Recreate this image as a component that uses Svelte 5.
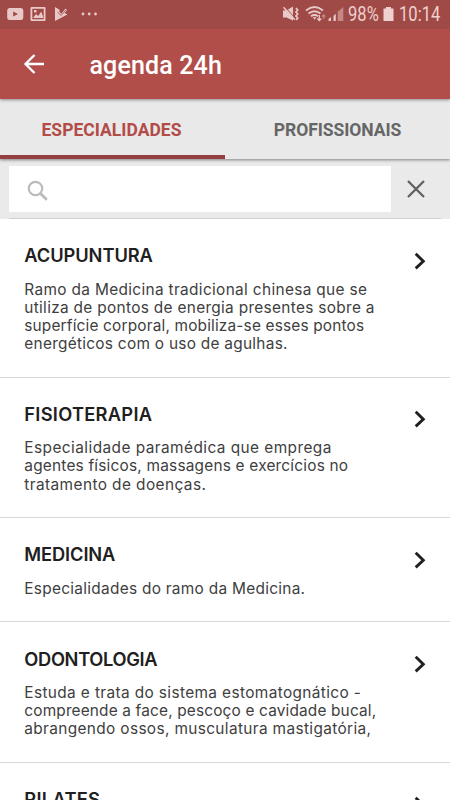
<script>
  const rows = [
    { title: 'ACUPUNTURA', width: 128.5, lines: [
      ['Ramo da Medicina tradicional chinesa que se', 343],
      ['utiliza de pontos de energia presentes sobre a', 350.5],
      ['superfície corporal, mobiliza-se esses pontos', 340],
      ['energéticos com o uso de agulhas.', 263.5]
    ] },
    { title: 'FISIOTERAPIA', width: 128, lines: [
      ['Especialidade paramédica que emprega', 307.5],
      ['agentes físicos, massagens e exercícios no', 324],
      ['tratamento de doenças.', 182]
    ] },
    { title: 'MEDICINA', width: 91, lines: [
      ['Especialidades do ramo da Medicina.', 281]
    ] },
    { title: 'ODONTOLOGIA', width: 133, lines: [
      ['Estuda e trata do sistema estomatognático -', 337],
      ['compreende a face, pescoço e cavidade bucal,', 352],
      ['abrangendo ossos, musculatura mastigatória,', 347]
    ] },
    { title: 'PILATES', width: 76, lines: [['', 0]] }
  ];

  // Spreads the letters so that the label takes the given width.
  function fit(node, width) {
    const count = node.textContent.length;
    if (!count || !width) return;
    const natural = node.getBoundingClientRect().width;
    node.style.letterSpacing = `${(width - natural) / count}px`;
  }
</script>

<div class="screen">
  <header>
    <div class="status">
      <svg class="left" width="104" height="29" viewBox="0 0 104 29" fill="#e9c9c8">
        <path fill-rule="evenodd" d="M9.5 8h11.5q2.3 0 2.3 2.5v7q0 2.5-2.3 2.5H9.5q-2.3 0-2.3-2.5v-7Q7.2 8 9.5 8zM13.2 11.5v5l4.8-2.5z" />
        <path fill-rule="evenodd" d="M31.5 7h13q1 0 1 1v12q0 1-1 1h-13q-1 0-1-1V8q0-1 1-1zM32.3 8.8v10.4h11.4V8.8z" />
        <path d="M33 18l3-4 2.2 2 3.1-4.5L43.5 18zM34 10h2.500v2.500H34z" />
        <path d="M55 7l4.500 2.800v2.200l1.800 1.700 4.200-5.200 1.700 1.400-2.600 3 2.800 1.600L55 21z" />
        <path d="M57.500 12.200l3.600 3.300 5.300-6" fill="none" stroke="#a04a47" stroke-width=".8" />
        <circle cx="83" cy="14" r="1.4" /><circle cx="89.200" cy="14" r="1.4" /><circle cx="95.500" cy="14" r="1.4" />
      </svg>
      <svg class="signals" width="64" height="29" viewBox="0 0 64 29" fill="none" stroke="#e9c9c8">
        <path d="M1 10.500h3.500L11 6.500v14L4.500 17.500H1z" fill="#e9c9c8" stroke="none" />
        <path d="M2.500 6.500l10.500 11.500" stroke="#a04a47" stroke-width="1" />
        <path d="M1.500 7.200l11.300 12.500" stroke-width="1.500" />
        <path d="M14 8l1.700 2-1.700 2 1.700 2-1.700 2 1.700 2-1.400 2" stroke-width="1.700" />
        <path d="M24 10.500q8.500-6.800 17 0M26.500 13.500q6-4.600 12 0M29 16.300q3.500-2.500 7 0" stroke-width="1.900" />
        <path d="M30.700 17.200h3.700l-1.800 2.600z" fill="#e9c9c8" stroke="none" />
        <path d="M37.300 15v5.500m-2-2l2 2 2-2" stroke-width="1.300" />
        <path d="M41.700 19v-4m-1.700 1.700l1.700-1.900 1.700 1.900" stroke="#c58d8a" stroke-width="1.100" />
        <path d="M46.500 21v-2l2.500-2V21zM51.500 21v-5l2.300-2.200V21z" fill="#e9c9c8" stroke="none" />
        <path d="M55.700 21v-9.200l5.600-4.800v14z" fill="#c58885" stroke="none" />
      </svg>
      <span class="battery-text"><span class="narrow">98%</span></span>
      <svg class="battery" width="11" height="29" viewBox="0 0 11 29"><path d="M0.500 8.500h2.500V7h5v1.500h2.500V21H.5z" fill="#eed1d0" /></svg>
      <span class="clock"><span class="narrow">10:14</span></span>
    </div>
    <div class="appbar">
      <svg width="24" height="24" viewBox="0 0 24 24" fill="none" stroke="#fff" stroke-width="2.300"><path d="M22 12H4M12.500 3L3.500 12l9 9" /></svg>
      <h1><span use:fit={132.5}>agenda 24h</span></h1>
    </div>
  </header>
  <nav>
    <button class="tab active"><span use:fit={140}>ESPECIALIDADES</span></button>
    <button class="tab"><span use:fit={127.5}>PROFISSIONAIS</span></button>
  </nav>
  <div class="search">
    <div class="field">
      <svg width="24" height="24" viewBox="0 0 24 24" fill="none" stroke="#bbb"><circle cx="9.500" cy="9.500" r="6.700" stroke-width="2.200" /><path d="M14.500 14.500l6.300 6.300" stroke-width="2.800" /></svg>
    </div>
    <svg class="clear" width="18" height="18" viewBox="0 0 18 18" fill="none" stroke="#606060" stroke-width="2.300"><path d="M1 1l16 16M17 1L1 17" /></svg>
    <i></i>
  </div>
  <main>
    {#each rows as row}
      <section>
        <div class="copy">
          <h2><span use:fit={row.width}>{row.title}</span></h2>
          {#each row.lines as [text, width]}
            <p><span use:fit={width}>{text}</span></p>
          {/each}
        </div>
        <svg class="chevron" width="12" height="18" viewBox="0 0 12 18" fill="none" stroke="#202020" stroke-width="2.900"><path d="M1.700 1.800L9.300 9.200l-7.600 7.200" /></svg>
      </section>
    {/each}
  </main>
</div>

<style>
  :global(body) { margin: 0; overflow: hidden; }
  .screen { width: 450px; height: 800px; overflow: hidden; background: #fff; display: flex; flex-direction: column; font-family: Roboto, sans-serif; }
  header, nav, .search { flex: none; }
  span { white-space: nowrap; display: inline-block; }
  svg { display: block; flex: none; }
  header { height: 99px; background: #b24e49; box-shadow: 0 1px 3px rgba(0,0,0,.4); position: relative; z-index: 2; }
  .status { height: 29px; background: #a04a47; display: flex; align-items: center; color: #eed1d0; font-size: 19.5px; line-height: 29px; }
  .narrow { transform: scaleX(.85); transform-origin: left; }
  .signals { margin-left: 177.500px; }
  .battery-text { width: 31px; margin-left: 2.500px; }
  .battery { margin-left: 4px; }
  .clock { margin-left: 5px; width: 44px; }
  .appbar { height: 70px; display: flex; align-items: center; padding-left: 22px; color: #fff; }
  h1 { margin: 4px 0 0 43.500px; font-size: 25px; line-height: 30px; font-weight: 500; }
  nav { height: 60px; display: flex; background: #e9e9e9; box-shadow: 0 1px 3px rgba(0,0,0,.45); position: relative; z-index: 1; }
  .tab { box-sizing: border-box; width: 225px; padding: 5px 0 0; border: 0; border-bottom: 4px solid transparent; background: none; color: #666; font: 700 17.5px/22px Roboto, sans-serif; text-align: center; }
  .active { color: #b34c48; border-color: #963f40; padding: 5px 2px 0 0; }
  .search { height: 60px; background: #eaeaea; display: flex; flex-wrap: wrap; box-sizing: border-box; padding: 7px 9px 0; }
  .field { width: 382px; height: 46px; background: #fff; display: flex; align-items: center; padding-left: 17px; box-sizing: border-box; }
  .field svg { margin-top: 4px; }
  .clear { margin: 14px 0 0 15.5px; }
  .search i { width: 432px; height: 1px; margin-top: 5px; background: #d0d0d0; }
  main { flex: 1; overflow: hidden; font-family: Inter, sans-serif; }
  section { display: flex; justify-content: space-between; border-bottom: 1px solid #d8d8d8; padding: 24.2px 24.5px 23.5px 24.3px; }
  h2 { margin: 0 0 13.4px; height: 24px; font-size: 18.3px; line-height: 24px; font-weight: 600; color: #202020; }
  p { margin: 0; height: 18.15px; font-size: 15.4px; line-height: 18.15px; color: #404040; }
  .chevron { margin-top: 8.6px; }
</style>
